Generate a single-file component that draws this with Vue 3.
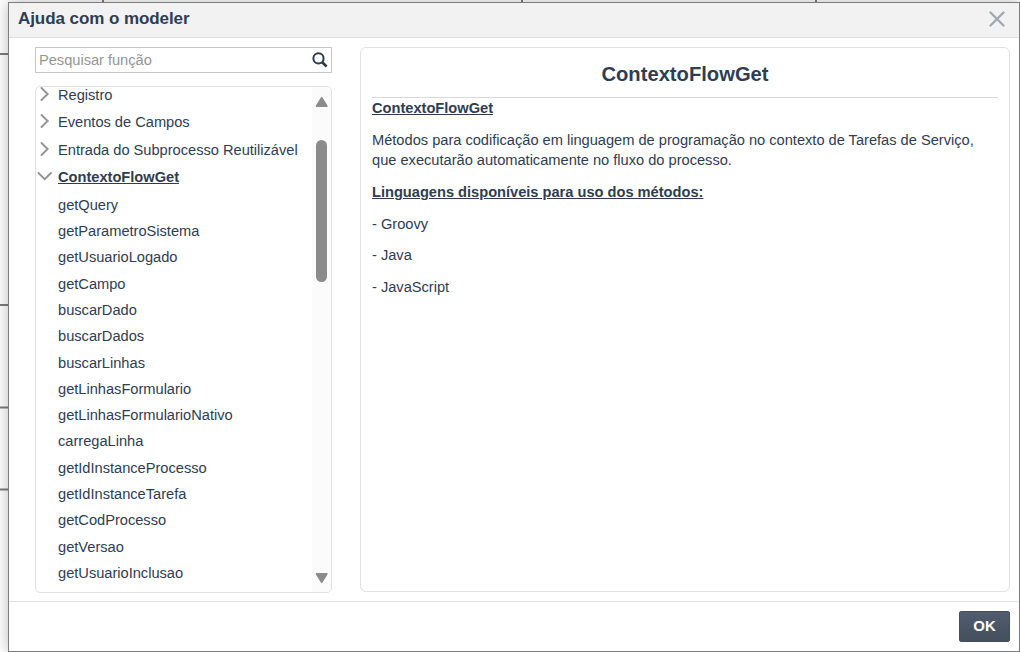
<script setup>
const groups = ['Registro', 'Eventos de Campos', 'Entrada do Subprocesso Reutilizável']
const methods = [
  'getQuery', 'getParametroSistema', 'getUsuarioLogado', 'getCampo', 'buscarDado',
  'buscarDados', 'buscarLinhas', 'getLinhasFormulario', 'getLinhasFormularioNativo',
  'carregaLinha', 'getIdInstanceProcesso', 'getIdInstanceTarefa', 'getCodProcesso',
  'getVersao', 'getUsuarioInclusao',
]
const languages = ['Groovy', 'Java', 'JavaScript']
</script>

<template>
  <div class="page">
    <svg class="canvas" width="1020" height="652" stroke="#7d7d7d" stroke-width="2">
      <path d="M103 0V3M522 0V3M816 0V3M0 54H9M0 305H9M0 407.500H9M0 489.500H9M1018 54H1020" />
    </svg>
    <section class="dialog">
      <header class="head">
        <h1>Ajuda com o modeler</h1>
        <svg class="close" width="16" height="16" viewBox="0 0 16 16">
          <path d="M1.500 1.500L14.500 14.500M14.500 1.500L1.500 14.500" stroke="#a1a8b1" stroke-width="2.300" stroke-linecap="round" />
        </svg>
      </header>
      <main class="body">
        <aside class="side">
          <div class="search">
            <input type="text" placeholder="Pesquisar função" />
            <svg width="16" height="16" viewBox="0 0 16 16" fill="none" stroke="#2b3a4f">
              <circle cx="6.500" cy="6.400" r="5.100" stroke-width="2" />
              <path d="M10.200 10.200L14.600 14.500" stroke-width="2.600" />
            </svg>
          </div>
          <div class="tree">
            <div class="items">
              <div v-for="g in groups" :key="g" class="group">
                <svg width="18" height="16" viewBox="0 0 18 16"><path d="M5.500 2L11.700 8L5.500 14" /></svg>
                <span>{{ g }}</span>
              </div>
              <div class="group open">
                <svg width="18" height="16" viewBox="0 0 18 16"><path d="M2.500 5L8.700 11.200L15 5" /></svg>
                <span>ContextoFlowGet</span>
              </div>
              <div v-for="m in methods" :key="m" class="method">{{ m }}</div>
            </div>
            <div class="scroll">
              <svg width="14" height="12" viewBox="0 0 14 12"><path d="M6.700 2L11.700 10H1.700Z" /></svg>
              <div class="track"><div class="thumb"></div></div>
              <svg width="14" height="12" viewBox="0 0 14 12"><path d="M6.700 10L11.700 2H1.700Z" /></svg>
            </div>
          </div>
        </aside>
        <article class="content">
          <h2>ContextoFlowGet</h2>
          <p class="strong first">ContextoFlowGet</p>
          <p>Métodos para codificação em linguagem de programação no contexto de Tarefas de Serviço,<br />que executarão automaticamente no fluxo do processo.</p>
          <p class="strong">Linguagens disponíveis para uso dos métodos:</p>
          <p v-for="l in languages" :key="l" class="lang">- {{ l }}</p>
        </article>
      </main>
      <footer class="foot"><button>OK</button></footer>
    </section>
  </div>
</template>

<style>
body { overflow: hidden; }
</style>

<style scoped>
* { box-sizing: border-box; }
.page {
  position: relative;
  width: 1020px;
  height: 652px;
  padding: 2px 0 0 8px;
  overflow: hidden;
  background: #fff;
  font-family: "Liberation Sans", Arial, sans-serif;
  font-size: 14.667px;
  letter-spacing: -.02px;
  color: #2f3d52;
}
.canvas { position: absolute; left: 0; top: 0; }
.dialog {
  position: relative;
  display: flex;
  flex-direction: column;
  width: 1012px;
  height: 650px;
  border: 1px solid #7d7d7d;
  background: #fff;
  box-shadow: 0 0 14px rgba(0, 0, 0, .28);
}
.head {
  display: flex;
  align-items: center;
  justify-content: space-between;
  height: 35px;
  padding: 0 14px 2px 9px;
  background: #f2f2f2;
  border-bottom: 1px solid #e1e1e1;
}
h1 { margin: 0; font-size: 17px; line-height: 20px; letter-spacing: -.07px; }
.body { display: flex; gap: 28px; height: 564px; padding: 9px 9px 0 26px; border-bottom: 1px solid #e1e1e1; }
.side { width: 297px; }
.search {
  display: flex;
  align-items: center;
  height: 26px;
  padding: 0 3px;
  border: 1px solid #c6c6c6;
}
.search input {
  flex: 1;
  min-width: 0;
  height: 24px;
  padding: 0;
  border: 0;
  outline: 0;
  background: none;
  font: 14.667px "Liberation Sans", Arial, sans-serif;
  letter-spacing: -.03px;
}
.search input::placeholder { color: #969696; }
.tree {
  display: flex;
  height: 507px;
  margin-top: 13px;
  border: 1px solid #e1e1e1;
  border-radius: 5px;
  overflow: hidden;
}
.items { flex: 1; margin-top: -6px; white-space: nowrap; }
.group { display: flex; align-items: center; height: 27.450px; line-height: 20px; }
.group svg { width: 18px; margin: 0 4px 2px 0; fill: none; stroke: #949494; stroke-width: 1.900; stroke-linecap: round; }
.open { font-weight: bold; text-decoration: underline; }
.method { height: 26.300px; padding-left: 22px; line-height: 28.600px; }
.scroll { display: flex; flex-direction: column; align-items: center; width: 19px; padding: 9px 0 8px; background: #fbfbfb; }
.scroll svg { flex: none; fill: #8b8b8b; stroke: #8b8b8b; stroke-width: 1.900; stroke-linejoin: round; }
.track { flex: 1; padding-top: 32px; }
.thumb { width: 11px; height: 142px; border-radius: 6px; background: #8b8b8b; }
.content { flex: 1; height: 545px; padding: 11px 11px 0; border: 1px solid #e1e1e1; border-radius: 6px; }
h2 { height: 39px; margin: 0; border-bottom: 1px solid #d9d9d9; font-size: 20.200px; line-height: 30px; letter-spacing: 0; text-align: center; }
p { margin: 0 0 12px; line-height: 20px; white-space: nowrap; }
.strong { font-weight: bold; text-decoration: underline; }
.lang { margin-bottom: 11.400px; }
.foot { display: flex; justify-content: flex-end; padding: 9px 9px 0; }
button {
  width: 51px;
  height: 31px;
  padding: 0 0 2px;
  border: 1px solid #434e5e;
  border-radius: 2px;
  background: linear-gradient(#515d70, #444f5d);
  color: #fff;
  font: bold 15px "Liberation Sans", Arial, sans-serif;
}
</style>
